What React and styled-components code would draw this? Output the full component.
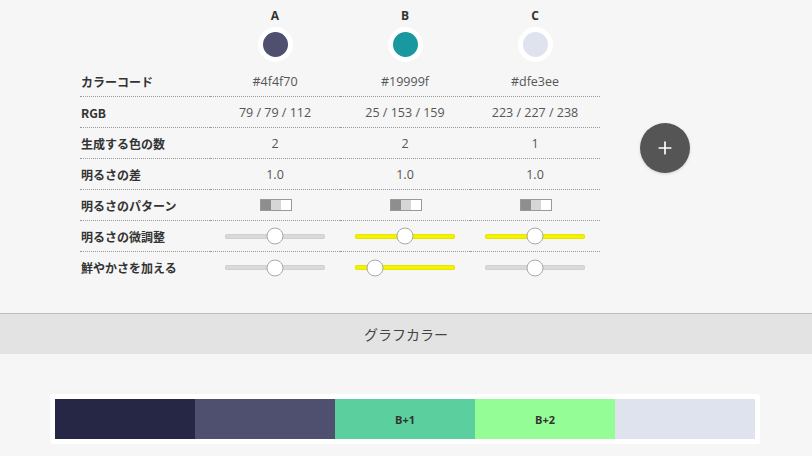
import React from 'react';
import styled, { createGlobalStyle } from 'styled-components';
import { Plus } from 'lucide-react';

const GlobalStyle = createGlobalStyle`
  html, body {
    margin: 0;
    padding: 0;
    background: #f6f6f6;
    font-family: "Open Sans", "Noto Sans CJK JP", sans-serif;
  }
`;

const Page = styled.div`
  width: 812px;
  height: 456px;
  overflow: hidden;
  background: #f6f6f6;
`;

const TopSection = styled.div`
  display: flex;
  align-items: flex-start;
  padding: 0 0 30px 80px;
`;

const Table = styled.div`
  display: grid;
  grid-template-columns: 130px 130px 130px 130px;
`;

const HeadCell = styled.div`
  height: 66px;
  display: flex;
  flex-direction: column;
  align-items: center;
  padding-top: 7px;
  box-sizing: border-box;
`;

const Letter = styled.div`
  font-size: 12px;
  font-weight: 700;
  color: #333;
  line-height: 17px;
  height: 17px;
`;

const Swatch = styled.div`
  width: 25px;
  height: 25px;
  margin-top: 3px;
  border-radius: 50%;
  border: 5px solid #fff;
  background: ${p => p.color};
`;

const Cell = styled.div`
  height: 31px;
  box-sizing: border-box;
  border-bottom: ${p => (p.last ? 'none' : '1px dotted #999')};
  display: flex;
  align-items: center;
  justify-content: ${p => (p.label ? 'flex-start' : 'center')};
  padding-left: ${p => (p.label ? '1px' : '0')};
  font-size: ${p => (p.label ? '12px' : '12.5px')};
  font-weight: ${p => (p.label ? 700 : 400)};
  color: ${p => (p.label ? '#333' : '#555')};
  font-family: ${p => (p.label ? '"Noto Sans CJK JP", "Open Sans", sans-serif' : '"Open Sans", "Noto Sans CJK JP", sans-serif')};
`;

const Pattern = styled.div`
  display: flex;
  width: 32px;
  height: 12px;
  box-sizing: border-box;
  border: 1px solid #999;
  margin-left: 1px;
`;

const PatternPart = styled.div`
  flex: 1;
  background: ${p => p.tone};
`;

const Track = styled.div`
  position: relative;
  width: 100px;
  height: 5px;
  border-radius: 3px;
  background: ${p => (p.active ? '#f3f300' : '#dadada')};
  box-shadow: inset 0 0 0 1px ${p => (p.active ? '#e6e600' : '#d0d0d0')};
`;

const Thumb = styled.div`
  position: absolute;
  top: 50%;
  width: 17px;
  height: 17px;
  box-sizing: border-box;
  border-radius: 50%;
  background: #fff;
  border: 1px solid #a8a8a8;
  transform: translate(-50%, -50%);
`;

const AddButton = styled.button`
  margin: 123px 0 0 40px;
  width: 50px;
  height: 50px;
  border-radius: 50%;
  border: none;
  background: #555;
  color: #fff;
  display: flex;
  align-items: center;
  justify-content: center;
  padding: 0;
  box-shadow: 0 1px 3px rgba(0, 0, 0, 0.15);
`;

const SectionBar = styled.div`
  height: 41px;
  box-sizing: border-box;
  border-top: 1px solid #bdbdbd;
  background: #e3e3e3;
  display: flex;
  align-items: center;
  justify-content: center;
  font-family: "Noto Sans CJK JP", sans-serif;
  font-size: 14px;
  color: #444;
`;

const StripArea = styled.div`
  display: flex;
  padding: 40px 0 0 50px;
`;

const StripFrame = styled.div`
  display: flex;
  padding: 5px;
  background: #fff;
  border-radius: 3px;
`;

const StripPart = styled.div`
  width: 140px;
  height: 40px;
  background: ${p => p.color};
  display: flex;
  align-items: center;
  justify-content: center;
  font-size: 11px;
  font-weight: 700;
  color: #333;
  font-family: "Open Sans", sans-serif;
`;

const colors = [
  { letter: 'A', hex: '#4f4f70', rgb: '79 / 79 / 112', count: 2, diff: '1.0', fine: { active: false, v: 0.5 }, vivid: { active: false, v: 0.5 } },
  { letter: 'B', hex: '#19999f', rgb: '25 / 153 / 159', count: 2, diff: '1.0', fine: { active: true, v: 0.5 }, vivid: { active: true, v: 0.2 } },
  { letter: 'C', hex: '#dfe3ee', rgb: '223 / 227 / 238', count: 1, diff: '1.0', fine: { active: true, v: 0.5 }, vivid: { active: false, v: 0.5 } },
];

const Slider = ({ active, v }) => (
  <Track active={active}>
    <Thumb style={{ left: `${v * 100}%` }} />
  </Track>
);

const strip = [
  { color: '#262645', text: '' },
  { color: '#4f4f70', text: '' },
  { color: '#5bcf9e', text: 'B+1' },
  { color: '#95fd96', text: 'B+2' },
  { color: '#dfe3ee', text: '' },
];

export default function App() {
  return (
    <Page>
      <GlobalStyle />
      <TopSection>
        <Table>
          <HeadCell />
          {colors.map(c => (
            <HeadCell key={c.letter}>
              <Letter>{c.letter}</Letter>
              <Swatch color={c.hex} />
            </HeadCell>
          ))}

          <Cell label>カラーコード</Cell>
          {colors.map(c => <Cell key={c.letter}>{c.hex}</Cell>)}

          <Cell label>RGB</Cell>
          {colors.map(c => <Cell key={c.letter}>{c.rgb}</Cell>)}

          <Cell label>生成する色の数</Cell>
          {colors.map(c => <Cell key={c.letter}>{c.count}</Cell>)}

          <Cell label>明るさの差</Cell>
          {colors.map(c => <Cell key={c.letter}>{c.diff}</Cell>)}

          <Cell label>明るさのパターン</Cell>
          {colors.map(c => (
            <Cell key={c.letter}>
              <Pattern>
                <PatternPart tone="#8e8e8e" />
                <PatternPart tone="#d6d6d6" />
                <PatternPart tone="#fff" />
              </Pattern>
            </Cell>
          ))}

          <Cell label>明るさの微調整</Cell>
          {colors.map(c => (
            <Cell key={c.letter}>
              <Slider {...c.fine} />
            </Cell>
          ))}

          <Cell label last>鮮やかさを加える</Cell>
          {colors.map(c => (
            <Cell key={c.letter} last>
              <Slider {...c.vivid} />
            </Cell>
          ))}
        </Table>
        <AddButton>
          <Plus size={20} strokeWidth={2} />
        </AddButton>
      </TopSection>

      <SectionBar>グラフカラー</SectionBar>

      <StripArea>
        <StripFrame>
          {strip.map((s, i) => (
            <StripPart key={i} color={s.color}>{s.text}</StripPart>
          ))}
        </StripFrame>
      </StripArea>
    </Page>
  );
}
